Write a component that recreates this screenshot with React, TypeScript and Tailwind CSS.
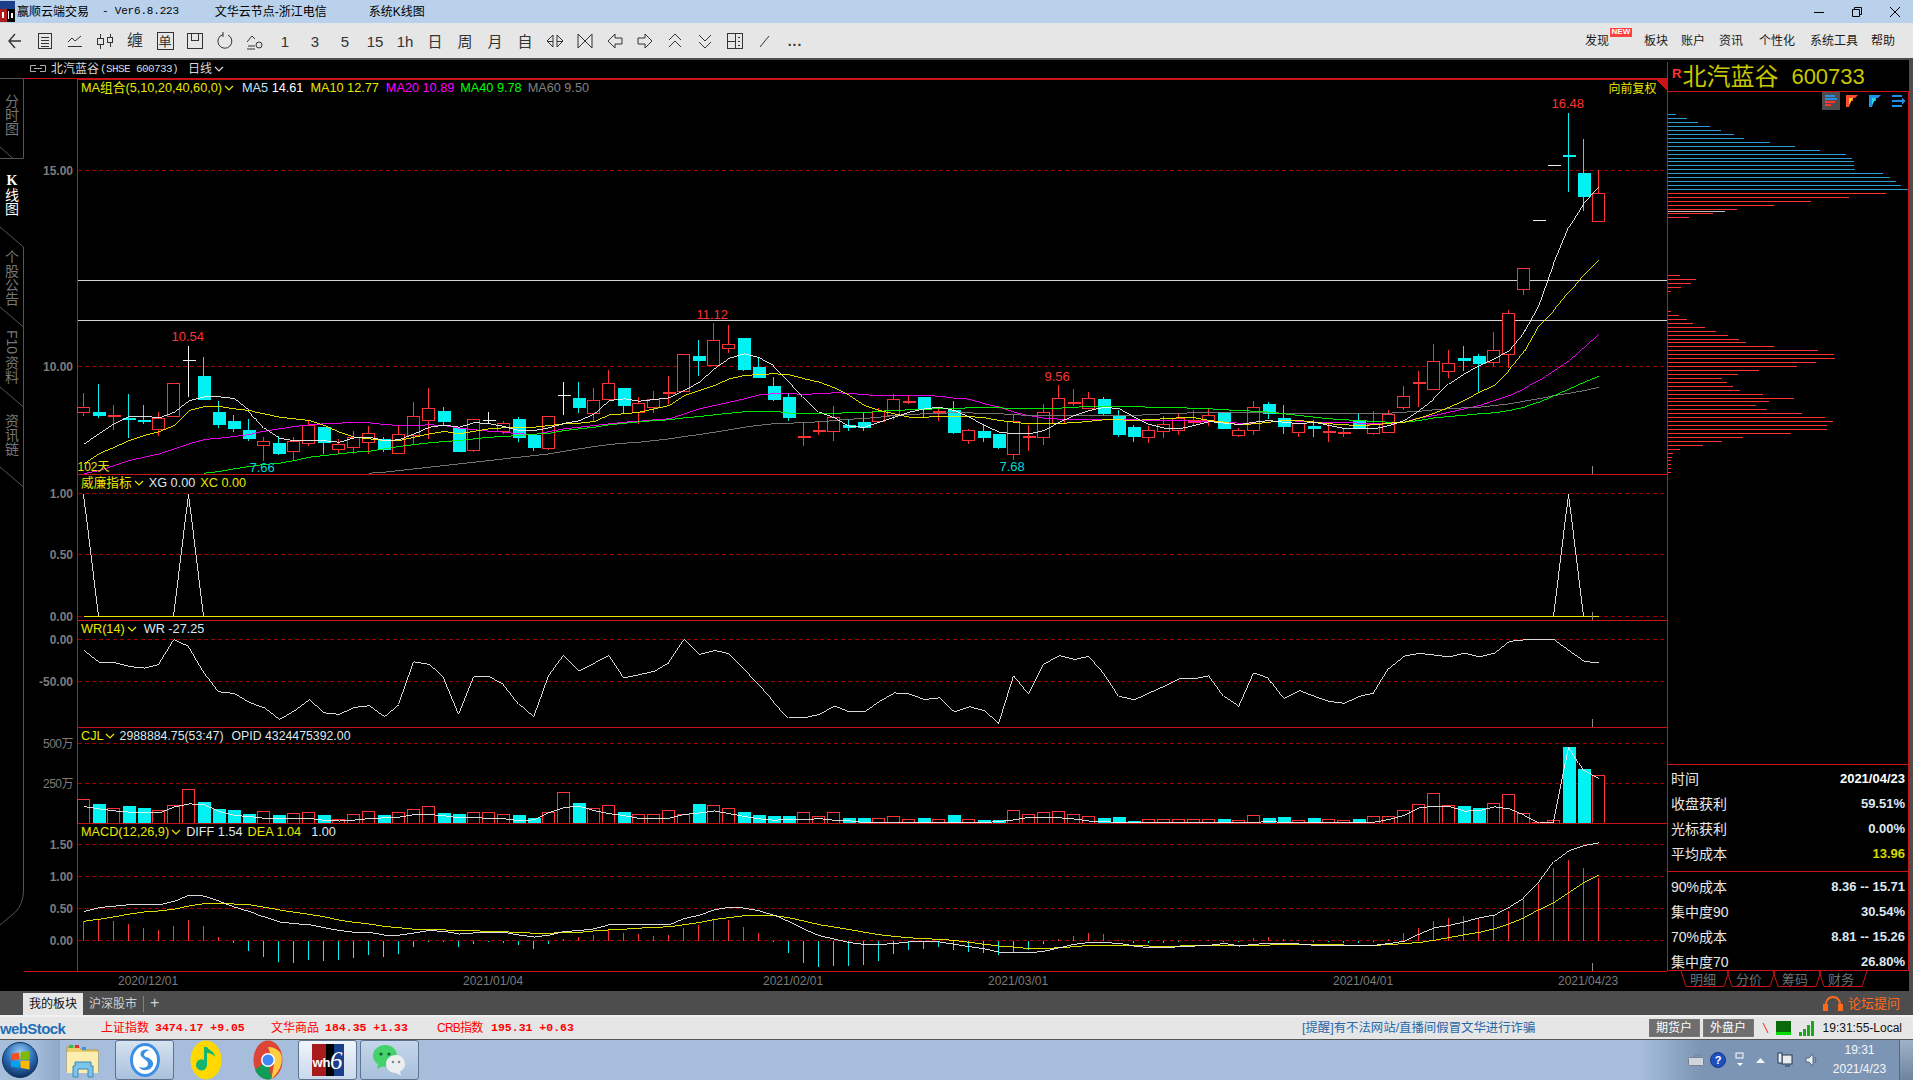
import type { ReactNode } from "react";

type Candle = ["r" | "c" | "w", number, number, number, number];

const FRAME = "#c81414";
const DASH = "#a00000";
const UP = "#ff3333";
const DOWN = "#00f2f2";
const YELLOW = "#f4f400";

const barX = (i: number) => 83 + 15 * i;

// open/close box top + bottom, then wick high + low (page px)
const candles: Candle[] = [
  ["r", 406.7, 412.3, 392, 415.7], ["c", 411, 415, 383, 417], ["r", 414.5, 415.5, 404, 429], ["c", 417.7, 419.7, 393, 437],
  ["c", 419, 421.7, 404, 423], ["r", 417.7, 428.7, 411, 435], ["r", 383, 416.3, 383, 416.3], ["w", 359, 360, 345, 396],
  ["c", 375, 399.7, 356, 399.7], ["c", 411, 424.7, 400, 427], ["c", 420, 428.7, 414, 431], ["c", 429, 438.7, 418, 440],
  ["r", 441.3, 444.7, 436, 460], ["c", 442, 453.7, 435, 454], ["r", 441, 451, 436, 460], ["r", 425, 442.7, 420, 445],
  ["c", 426, 442.7, 426, 453], ["r", 444.3, 449.3, 438, 453], ["r", 436.7, 447.3, 430, 453], ["r", 433, 442.3, 425, 453],
  ["c", 438, 449, 436, 451], ["r", 434, 453, 424, 453], ["r", 416, 435, 401, 443], ["r", 408, 420, 387, 438],
  ["c", 410, 421, 406, 425], ["c", 427, 451, 427, 451], ["r", 419, 450, 419, 451], ["w", 419.7, 420.3, 411, 423],
  ["r", 423, 431, 420, 433], ["c", 418, 437.7, 416, 441.7], ["c", 434.7, 447.7, 433, 450.7], ["r", 416.3, 447.7, 416, 449.7],
  ["w", 394, 395, 381, 414], ["c", 397, 407.7, 381, 412.7], ["r", 400.3, 412.7, 387, 420], ["r", 383.3, 399.3, 369, 399.3],
  ["c", 387.3, 405.7, 387, 413], ["r", 403.3, 411.7, 396, 423], ["r", 399.3, 406.7, 390, 412.7], ["r", 391.3, 392.7, 375, 403],
  ["r", 354.3, 390.7, 354.3, 390.7], ["c", 355, 360, 339, 375], ["r", 340.3, 364.7, 322, 364.7], ["r", 344.3, 347.7, 324, 352.7],
  ["c", 337, 369, 337, 370.7], ["c", 366, 377, 357, 377], ["c", 385, 399, 376, 400], ["c", 396, 417, 392, 420.7],
  ["r", 435, 436.3, 422.7, 445], ["r", 429.3, 431.7, 421.7, 434], ["r", 417.3, 430.7, 405.3, 440], ["c", 424.7, 427, 418, 430],
  ["c", 421, 427.7, 412.7, 430], ["r", 411, 420.7, 407, 422.7], ["r", 399.3, 415.3, 393, 419.3], ["r", 400.3, 401.7, 394, 403.3],
  ["c", 396, 409.3, 396, 417], ["r", 410, 412, 406, 420.7], ["c", 409.3, 432, 400, 433.3], ["r", 430.3, 439.7, 428.3, 443],
  ["c", 430, 437, 424, 441], ["c", 433, 447, 433, 448], ["r", 421.3, 454.3, 414, 459], ["r", 435, 436.7, 424, 450],
  ["r", 412.3, 436.7, 403.3, 444], ["r", 398.3, 423.3, 384, 423.3], ["r", 401.3, 403.7, 388, 405.3], ["r", 398.3, 408.3, 391, 408],
  ["c", 398, 413, 396.3, 415.3], ["c", 415, 434, 409.3, 436], ["c", 426, 436.7, 424.7, 441], ["r", 430.3, 436.7, 425, 442],
  ["r", 424.3, 430.7, 415, 437], ["r", 418.3, 429.7, 413.3, 434], ["r", 419.3, 422, 409, 424.7], ["r", 415, 420, 407.7, 425],
  ["c", 411, 428.7, 411, 428.7], ["r", 430.3, 434.7, 427.7, 436.7], ["r", 407.3, 429.7, 400, 434], ["c", 403, 413.7, 401.7, 418],
  ["c", 417, 426.7, 404, 433], ["r", 423.3, 431.7, 423.3, 436.7], ["c", 425, 428.7, 419.3, 436], ["r", 430, 431.7, 421.7, 441],
  ["r", 431.3, 433.3, 428.3, 436], ["c", 420.7, 428.3, 412.7, 428.3], ["r", 424.3, 433, 410.7, 434], ["r", 414.3, 431.7, 409, 431.7],
  ["r", 396.3, 406.7, 385, 409.7], ["r", 381, 382.7, 370, 406], ["r", 361.3, 388.7, 343, 388.7], ["r", 363.3, 371.3, 349, 377.7],
  ["c", 357, 360, 345, 370], ["c", 355, 363.7, 353, 391], ["r", 350.3, 361.7, 331.7, 365], ["r", 313.3, 354.3, 309, 367.3],
  ["r", 268.3, 289, 268.3, 294], ["w", 219, 220, 219, 220], ["w", 164, 165, 164, 165], ["c", 154, 156, 112, 191.7],
  ["c", 172, 196, 138, 210], ["r", 193.3, 220.7, 169, 220.7],
];

const ma5 = [443.3, 433, 423, 416, 415.7, 417.3, 411.7, 400, 396.3, 396.3, 398, 410, 427.7, 437.7, 440.3, 440.3, 440.3, 441.7, 437.3, 436.7, 440, 439.3, 433.3, 426.7, 424.7, 426.7, 422, 423.3, 426, 430, 430, 427.3, 422.7, 420.3, 413.3, 400, 398.3, 400.7, 399, 397.3, 390, 381.7, 368.3, 357.7, 353.3, 357.3, 365, 380, 396.7, 411.7, 417.3, 426, 426.7, 421.7, 416.7, 411.7, 408.3, 406.7, 410, 416.7, 425, 431.7, 433.3, 433.3, 430, 421.7, 415, 410, 406.7, 408.3, 416.7, 424, 427.7, 428.3, 425, 421, 422.7, 424, 421.7, 420, 421.7, 423.3, 421.7, 425, 428, 428.3, 428.3, 425, 420, 410, 398.3, 383.3, 373.3, 365, 358.3, 350, 332, 305, 263, 226.7, 203, 186.7];
const ma10 = [463, 453, 446.7, 440, 435, 431, 425, 410, 406, 406, 408.3, 410, 413.3, 416.7, 418.3, 420, 425, 431.7, 436.7, 438.3, 440, 440, 436.7, 433.3, 431, 433.3, 430.7, 428.3, 427.3, 427.3, 426.7, 425, 423.3, 422.7, 421, 414.3, 413.3, 411.7, 408.3, 405, 395, 390, 385, 378.3, 375, 374, 373.3, 374.3, 378.3, 381.7, 387.3, 395, 405, 410, 413.3, 416.7, 416.7, 416, 416, 416, 417.3, 420, 421.7, 423.3, 423.3, 422.7, 422.3, 420.7, 419.3, 419.3, 420, 419, 418.3, 417.3, 417.3, 420, 421.7, 424.3, 423.3, 421.7, 420, 420, 421.7, 423.3, 424.3, 425, 424.3, 422.7, 421.7, 417.7, 412.7, 406.7, 400, 391.7, 385, 370, 351.7, 325, 310, 291.7, 274, 259];
const ma20 = [473, 470, 465, 460, 456.7, 453.3, 448.3, 443.3, 439, 437.7, 436, 434, 430.7, 428.3, 426, 424.3, 423.3, 422.7, 421.7, 422.3, 424, 425, 425, 424.3, 425, 427.7, 429.3, 430.7, 431.7, 433.3, 434, 431, 428.3, 426.7, 425, 423.3, 421.7, 420.7, 419.3, 418.3, 413.3, 408.3, 405, 401.7, 398.3, 394.3, 393.3, 393.3, 393.7, 393.3, 392.3, 392.7, 394.3, 395, 395, 395, 395, 395.7, 397.7, 398.7, 403.3, 406.7, 411.7, 415, 417.7, 418.7, 419.3, 419.3, 419.3, 419.3, 419.3, 420, 420, 420, 420.7, 420.7, 421.7, 422.7, 423.3, 421.7, 420, 420.7, 421.7, 421.7, 421.7, 422.7, 423.3, 423.3, 421.7, 417.3, 415, 411.7, 408.3, 405, 400, 395, 388.3, 380, 370, 360, 346.7, 333.3];
const ma40 = [472.7, 471, 468.3, 466, 464, 462.7, 460, 456.7, 455, 453.3, 451.7, 450.7, 448.3, 446, 444, 442.3, 441, 440, 438.3, 436.7, 436, 435, 433.7, 432.7, 430, 428.3, 426.7, 424.3, 422.7, 421.3, 420, 419.3, 417.3, 416, 414.3, 412.7, 411.3, 410.7, 410.7, 412.7, 413.3, 413.3, 412.7, 412.3, 412.3, 410.7, 410, 409.3, 408.7, 408.3, 408, 407.3, 407.3, 407.3, 408.3, 408.3, 408.3, 407.7, 406.7, 406, 405.7, 405.7, 406, 406.7, 406.7, 407.3, 407.7, 408.3, 409.3, 410, 410.7, 411.7, 413.3, 415, 416.7, 418.3, 419.3, 420, 421, 421.7, 421.7, 420, 417.3, 416, 414.7, 413.3, 412.3, 410, 406.7, 401.7, 395, 388.3, 381.7, 375.7];
const ma60 = [472.7, 471.7, 470, 468.3, 466.7, 465, 463.3, 461.7, 460, 458.3, 456.7, 455, 453.3, 450.7, 448.3, 446, 444, 442.7, 441.7, 440, 438.3, 436, 434, 431.7, 429.3, 426.7, 424.7, 423.3, 422.7, 422, 421.3, 420, 418.7, 418, 416.7, 415, 414, 413.3, 412.7, 412.3, 412.3, 413.3, 413.3, 414, 415, 415, 415, 415, 415, 415, 415, 415, 414, 413.3, 412.7, 412.3, 412, 412, 412, 412, 412, 412.7, 412.7, 412.7, 412.7, 413.3, 413.3, 413.3, 412.7, 411.7, 410.7, 409.3, 408.3, 407.3, 406.7, 405, 403.3, 400.7, 398.3, 395, 392.7, 390, 386.7];

const wr = [650.4, 662, 662, 666, 667.6, 664, 639.4, 646.3, 671.8, 691.4, 693, 702, 707.2, 719, 710.3, 699.3, 712.4, 713.8, 706.9, 705.2, 716.2, 703.8, 661.4, 663.9, 677.6, 713.8, 676.3, 676.3, 684.5, 703.8, 716.9, 675.2, 654.6, 670, 662.5, 654.6, 677.3, 674.2, 670.7, 662, 639.4, 653.9, 650, 653.2, 668.3, 683.8, 701, 717.2, 717.2, 714, 705.5, 711.4, 711.4, 701, 692.4, 693.5, 699, 697.3, 711.4, 706.2, 710.3, 723.4, 675.2, 693.5, 663.2, 655.2, 659, 655.6, 672.8, 695.9, 699.3, 692.4, 685.6, 678.3, 678.3, 675.2, 695.9, 706.2, 672.5, 678, 697.6, 690, 695.9, 701, 702.8, 695.9, 692.4, 667.6, 655.6, 652.8, 654.6, 656.3, 652.8, 656.3, 652.8, 640.8, 639.4, 639.4, 639.4, 650.4, 661, 662.5];

const volTop = [799.2, 803, 808, 805, 807, 810, 805, 789, 801, 808, 809, 813, 811, 814, 813, 812, 814, 818.5, 814, 811, 814, 812, 809, 806, 812, 813, 812, 812, 814, 814, 817, 812, 792, 802, 808, 805.4, 811, 814, 814, 810, 814, 803, 805.4, 808, 811, 814, 815, 815, 812, 815.5, 812, 817, 817, 817.5, 816.4, 819, 817, 819, 814, 818.5, 819, 819, 810, 814, 812, 811, 814, 815.5, 817, 816, 820, 819, 818.5, 818.5, 819, 818.5, 818, 820, 814.5, 817, 816, 820, 817, 818.5, 820, 818, 816.4, 815.5, 810, 804, 793, 805, 805, 807, 803, 794, 813, 822, 820, 746, 768, 775];
const volLineEnd: Record<number, number> = { 97: 822.5, 98: 821.5, 99: 746, 100: 770, 101: 778.5 };

const macdBar = [920.4, 919, 920.4, 923, 927, 929, 925, 919, 925, 936, 942.8, 950.7, 956.5, 961.7, 962.8, 959, 960, 959.3, 957.6, 954.8, 956.5, 953.8, 946.6, 941.8, 941, 946.6, 943.5, 941.8, 942, 944.5, 948, 943.5, 938.3, 936, 934.2, 929.7, 932, 933.8, 935.2, 934.8, 927, 924.9, 919.7, 919.7, 926, 932.8, 941.4, 952.4, 962, 966.5, 965.5, 965.5, 964.5, 960, 953.8, 949, 948, 946.6, 949.7, 951.7, 952.8, 954.5, 951.4, 949.7, 943.8, 938, 935, 932.4, 933.8, 939, 942, 942.8, 942.8, 941.5, 940, 939.4, 941, 941, 937.6, 936.9, 938.7, 939.4, 941, 941.4, 942, 942, 941, 938.7, 932.8, 927.3, 920, 917.3, 915.2, 917.3, 915.6, 910, 899, 883.6, 867, 859.4, 867, 877.4];
const diff = [911, 907, 905.6, 904.2, 904.2, 904.2, 900.8, 894.6, 895.6, 900.8, 906.6, 911, 916.3, 921.4, 923.2, 924.2, 927.3, 930, 931.8, 931.8, 934.5, 934.5, 932.4, 930, 931, 933.5, 932.4, 931.8, 931.8, 934.5, 936.6, 934.5, 931, 930, 928.3, 924.2, 923.5, 924.2, 924.2, 924.2, 918, 914.6, 909.4, 906.6, 907.6, 910.4, 914.6, 921.4, 929, 935.2, 938.6, 942, 944, 944, 943, 941.4, 941.4, 941.4, 943.8, 946.2, 948.3, 951.7, 951.7, 952.4, 950.7, 947.2, 943.8, 942, 942, 943, 945.5, 947.2, 947.2, 946.2, 945.5, 944.8, 943, 945.5, 943.8, 942.8, 943, 943.5, 944.8, 944.8, 944.8, 944.8, 944.8, 943, 940.7, 933.5, 927.3, 924.9, 921.4, 917.3, 914.6, 906.6, 897.3, 881.8, 861.2, 850, 845, 842.2];
const dea = [920.7, 918.7, 916.3, 913.5, 911.4, 910.4, 908.7, 905.3, 903.2, 903.2, 903.5, 904.2, 906.6, 909.4, 911.8, 913.9, 916.3, 919.7, 921.8, 923.5, 925.9, 927.3, 928.7, 929.4, 929.4, 930.4, 930.4, 930.7, 931.4, 931.8, 932.8, 932.8, 931.8, 931.8, 930.4, 929.4, 928.7, 927.6, 926.9, 926.2, 924.2, 922, 919, 917, 915.2, 914.6, 915.2, 917.3, 920.7, 924.2, 926.6, 929, 931.8, 934.2, 935.9, 937.3, 938.3, 938.7, 940, 941.8, 943.8, 945.5, 946.6, 948, 948, 947.2, 946.2, 944.8, 944.8, 944.8, 945, 945.5, 945.5, 945.5, 945, 945, 944.8, 945, 944.8, 944.5, 944.1, 944.1, 944.1, 944.1, 944.5, 944.5, 944.8, 944.1, 943, 942, 939.7, 937, 934.2, 931.8, 928.3, 923.2, 917.3, 909.4, 901.8, 891.5, 881.8, 874.3];

// chip distribution: [y, width]
const blueChips: [number, number][] = [[114, 8], [118, 19], [122, 30], [126, 42], [130, 53], [134, 66], [138, 76], [142, 102], [146, 127], [150, 152], [154, 178], [158, 184], [161, 186], [165, 186], [169, 187], [173, 215], [177, 222], [181, 228], [185, 233], [189, 240]];
const redChips: [number, number][] = [[193, 218], [197, 181], [201, 143], [205, 106], [209, 69], [213, 45], [217, 21], [275, 12], [279, 28], [283, 23], [287, 13], [291, 3], [311, 3], [315, 11], [319, 19], [323, 25], [327, 37], [331, 48], [335, 60], [339, 71], [342, 78], [346, 106], [350, 150], [354, 166], [358, 167], [362, 148], [366, 129], [370, 91], [374, 70], [378, 54], [382, 59], [386, 65], [390, 72], [394, 95], [398, 126], [401, 101], [405, 88], [409, 99], [413, 134], [417, 157], [421, 165], [425, 159], [429, 159], [433, 123], [437, 75], [441, 54], [445, 35], [449, 12], [453, 5], [457, 4], [460, 3], [464, 3], [468, 3], [472, 3]];

const toolTexts = (s: string) => <span className="text-[15px] leading-none text-[#333]">{s}</span>;

const Ico = ({ children }: { children: ReactNode }) => (
  <svg width="20" height="20" viewBox="0 0 20 20" fill="none" stroke="#333" strokeWidth="1" shapeRendering="crispEdges">
    {children}
  </svg>
);

const toolItems: ReactNode[] = [
  <Ico key="a"><path d="M10 3 4 10l6 7M4 10h12" shapeRendering="auto" strokeWidth="1.4" /></Ico>,
  <Ico key="b"><path d="M3.5 2.5h13v15h-13zM6 6.5h8M6 9.5h8M6 12.5h8M6 15h8" /></Ico>,
  <Ico key="c"><path d="M3 11l4-4 3 3 6-5M3 15.5h14" shapeRendering="auto" /></Ico>,
  <Ico key="d"><path d="M2.5 7.5h6v6h-6zM5.5 3v4.5M5.5 13.5V18M12.5 6.5h5v5h-5zM15 2.5v4M15 11.5V16" /></Ico>,
  <span key="e" className="text-[16px] leading-none text-[#333]">缠</span>,
  <span key="f" className="flex h-[18px] w-[17px] items-center justify-center border border-[#333] text-[13px] leading-none text-[#333]">单</span>,
  <Ico key="g"><path d="M2.5 2.5h15v15h-15zM6.5 2.5v7h7v-7" /></Ico>,
  <Ico key="h"><path d="M8 3.5a7 7 0 1 0 5 .5M8 1v5" shapeRendering="auto" /></Ico>,
  <Ico key="i"><path d="M2 11l5-6 3 3M3 15h7M2 18h8" shapeRendering="auto" /><circle cx="14" cy="14" r="3" shapeRendering="auto" /></Ico>,
  toolTexts("1"), toolTexts("3"), toolTexts("5"), toolTexts("15"), toolTexts("1h"), toolTexts("日"), toolTexts("周"), toolTexts("月"), toolTexts("自"),
  <Ico key="j"><path d="M8 4 2 10l6 6zM12 4l6 6-6 6z" shapeRendering="auto" /><path d="M8 10H3M12 10h5" /></Ico>,
  <Ico key="k"><path d="M3 3v14M17 3v14M3 3l7 7-7 7M17 3l-7 7 7 7" shapeRendering="auto" /></Ico>,
  <Ico key="l"><path d="M10 3 3 10l7 7v-4h7V7h-7z" shapeRendering="auto" /></Ico>,
  <Ico key="m"><path d="M10 3l7 7-7 7v-4H3V7h7z" shapeRendering="auto" /></Ico>,
  <Ico key="n"><path d="M4 9l6-6 6 6M4 16l6-6 6 6" shapeRendering="auto" /></Ico>,
  <Ico key="o"><path d="M4 4l6 6 6-6M4 11l6 6 6-6" shapeRendering="auto" /></Ico>,
  <Ico key="p"><path d="M2.5 2.5h15v15h-15zM10.5 2.5v15M2.5 10.5h8M13 6h2M13 10h2M13 14h2" /></Ico>,
  <Ico key="q"><path d="M5 16 14 5" shapeRendering="auto" /></Ico>,
  <span key="r" className="text-[14px] font-bold leading-none tracking-[1px] text-[#333]">...</span>,
];

const menus: [string, string][] = [["板块", "ml-[13px]"], ["账户", "ml-[13px]"], ["资讯", "ml-[14px]"], ["个性化", "ml-[16px]"], ["系统工具", "ml-[15px]"], ["帮助", "ml-[13px]"]];

function Chevron({ color = "#e8e800" }: { color?: string }) {
  return (
    <svg width="10" height="6" viewBox="0 0 10 6" fill="none" stroke={color} strokeWidth="1.2" className="shrink-0">
      <path d="M1 1l4 4 4-4" />
    </svg>
  );
}

function poly(start: number, ys: number[]) {
  return ys.map((y, i) => `${barX(start + i)},${y}`).join(" ");
}

function Grid({ ys }: { ys: number[] }) {
  return (
    <>
      {ys.map((y) => (
        <line key={y} x1="77" x2="1667" y1={y} y2={y} stroke={DASH} strokeDasharray="4 3" />
      ))}
    </>
  );
}

function Marker({ y }: { y: number }) {
  return <line x1="1591.5" x2="1591.5" y1={y - 9} y2={y} stroke="#8c8c8c" />;
}

function Line({ start = 0, ys, color }: { start?: number; ys: number[]; color: string }) {
  return <polyline points={poly(start, ys)} fill="none" stroke={color} strokeWidth="0.9" />;
}

// one indicator pane: y axis on the left, plot drawn in page coordinates
function Pane({ top, height, ticks, legend, children }: { top: number; height: number; ticks: [string, number][]; legend: ReactNode; children: ReactNode }) {
  return (
    <div className="flex" style={{ height }}>
      <div className="relative w-[53px] shrink-0">
        {ticks.map(([label, y]) => (
          <span
            key={label}
            className={`absolute right-[4px] text-[12px] leading-[14px] text-[#7c7c7c] ${label.includes("万") ? "font-normal tracking-[-0.5px]" : "font-bold"}`}
            style={{ top: y - top - 7 }}
          >
            {label}
          </span>
        ))}
      </div>
      <div className="relative flex-1 border-l border-t border-[#c81414]">
        <svg className="absolute left-[-1px] top-[-1px]" width="1590" height={height} viewBox={`76.5 ${top - 0.5} 1590 ${height}`} shapeRendering="crispEdges">
          {children}
        </svg>
        <div className="absolute left-[3px] top-0 flex h-[16px] items-center whitespace-nowrap text-[12.7px] leading-none">{legend}</div>
      </div>
    </div>
  );
}

function KChart() {
  const flagged: [string, string, number, number][] = [
    ["10.54", "#ff3333", 94, 250],
    ["11.12", "#ff3333", 619, 228],
    ["9.56", "#ff3333", 967, 290],
    ["16.48", "#ff3333", 1474, 17],
    ["7.66", "#00d8d8", 172, 381],
    ["7.68", "#00d8d8", 922, 380],
  ];
  return (
    <Pane
      top={79}
      height={395}
      ticks={[["15.00", 170.5], ["10.00", 366.5]]}
      legend={
        <>
          <span className="text-[#e8e800]">MA组合(5,10,20,40,60,0)</span>
          <span className="ml-[2px]"><Chevron /></span>
          <span className="ml-[8px] text-[#bfe6ff]">MA5 <span className="text-white">14.61</span></span>
          <span className="ml-[7px] text-[#e8e800]">MA10 12.77</span>
          <span className="ml-[7px] text-[#ff00ff]">MA20 10.89</span>
          <span className="ml-[6px] text-[#00ff00]">MA40 9.78</span>
          <span className="ml-[6px] text-[#808080]">MA60 9.50</span>
        </>
      }
    >
      <Grid ys={[170, 366]} />
      <line x1="77" x2="1667" y1="280" y2="280" stroke="#d4d4d4" />
      <line x1="77" x2="1667" y1="320" y2="320" stroke="#d4d4d4" />
      {candles.map(([kind, top, bottom, high, low], i) => {
        const x = barX(i);
        const color = kind === "r" ? UP : kind === "c" ? DOWN : "#f0f0f0";
        const h = bottom - top;
        return (
          <g key={i}>
            <line x1={x} x2={x} y1={high} y2={low} stroke={color} />
            {kind === "r" && h > 3 ? (
              <rect x={x - 6} y={top} width="12" height={h} fill="#000" stroke={color} />
            ) : (
              <rect x={x - 6} y={top} width="13" height={kind === "w" ? 1 : Math.max(h, 2)} fill={color} />
            )}
          </g>
        );
      })}
      <Line ys={ma20} color="#ff00ff" />
      <Line start={19} ys={ma60} color="#808080" />
      <Line start={8} ys={ma40} color="#00ff00" />
      <Line ys={ma10} color={YELLOW} />
      <Line ys={ma5} color="#f4f4f4" />
      <Marker y={474} />
      <polygon points="1655,79 1667,79 1667,91" fill={FRAME} />
      {flagged.map(([label, color, left, top]) => (
        <text key={label} x={left + 77} y={top + 79 + 11} fill={color} fontSize="13" shapeRendering="auto">{label}</text>
      ))}
      <text x="77" y="470" fill="#e8e800" fontSize="12" shapeRendering="auto">102天</text>
      <text x="1608" y="92" fill="#e8e800" fontSize="12" shapeRendering="auto">向前复权</text>
    </Pane>
  );
}

function LeftRail() {
  const outline = "M0 18.5h23.5v80H0M0 87l13 11.5M0 167l23.5 20M0 247l23.5 20M0 327l23.5 20M0 407l23.5 20M23.5 187v643q0 14-8 22L0 865";
  return (
    <div className="relative h-full w-[24px] shrink-0 text-[14px] leading-[14px] text-[#777]">
      <svg className="absolute left-0 top-0" width="24" height="900" fill="none" stroke="#555">
        <path d={outline} />
      </svg>
      <div className="flex flex-col items-center pt-[34px]">
        <div className="flex h-[80px] w-[14px] flex-col items-center"><span>分</span><span>时</span><span>图</span></div>
        <div className="flex h-[76px] w-[14px] flex-col items-center font-bold text-white"><span className="font-['Liberation_Serif']">K</span><span className="font-normal">线</span><span className="font-normal">图</span></div>
        <div className="flex h-[80px] w-[14px] flex-col items-center"><span>个</span><span>股</span><span>公</span><span>告</span></div>
        <div className="flex h-[84px] w-[14px] flex-col items-center"><span className="mb-[2px] [writing-mode:vertical-rl]">F10</span><span>资</span><span>料</span></div>
        <div className="flex h-[80px] w-[14px] flex-col items-center"><span>资</span><span>讯</span><span>链</span></div>
      </div>
    </div>
  );
}

function ChipPanel() {
  const stats: [string, string, string][] = [
    ["时间", "2021/04/23", "text-white"],
    ["收盘获利", "59.51%", "text-[#dfe8f0]"],
    ["光标获利", "0.00%", "text-[#dfe8f0]"],
    ["平均成本", "13.96", "text-[#d8d800]"],
  ];
  const stats2: [string, string][] = [
    ["90%成本", "8.36 -- 15.71"],
    ["集中度90", "30.54%"],
    ["70%成本", "8.81 -- 15.26"],
    ["集中度70", "26.80%"],
  ];
  return (
    <div className="flex h-full w-[242px] shrink-0 flex-col pt-[2px]">
      <div className="flex h-[30px] items-center border-b border-l border-[#c81414] pl-[4px] text-[#c8c800]">
        <span className="-mt-[6px] text-[13px] font-bold leading-none text-[#ff3333]">R</span>
        <span className="ml-[1px] text-[24px] leading-none">北汽蓝谷</span>
        <span className="ml-[13px] text-[22px] leading-none">600733</span>
      </div>
      <div className="relative h-[673px] border-b border-l border-r border-[#c81414]">
        <svg className="absolute left-0 top-0" width="240" height="672" viewBox="1668 92.5 240 672" shapeRendering="crispEdges">
          {blueChips.map(([y, w]) => (
            <rect key={y} x="1668" y={y} width={w} height="1" fill="#2a9bd6" />
          ))}
          {redChips.map(([y, w]) => (
            <rect key={y} x="1668" y={y} width={w} height="1" fill={UP} />
          ))}
          <rect x="1668" y="211" width="57" height="1" fill="#bdbdbd" />
        </svg>
        <div className="absolute right-[2px] top-0 flex items-center">
          <span className="flex h-[18px] w-[18px] items-center justify-center bg-[#4d4d4d]">
            <svg width="12" height="12" viewBox="0 0 12 12" shapeRendering="crispEdges"><rect y="0" width="10" height="2" fill="#2a8fe0" /><rect y="3" width="12" height="2" fill="#2a8fe0" /><rect y="6" width="10" height="2" fill={UP} /><rect y="9" width="6" height="2" fill={UP} /></svg>
          </span>
          <svg className="ml-[6px]" width="12" height="12" viewBox="0 0 12 12"><path d="M0 0h12L9 3H7v3H5l-2 6H0z" fill="#ff4b2e" /><path d="M3 3h4L3 10z" fill="#ffd21f" /></svg>
          <svg className="ml-[11px]" width="12" height="12" viewBox="0 0 12 12"><path d="M0 0h12L9 3H7v3H5l-2 6H0z" fill="#1e90e6" /><path d="M3 3h4L3 10z" fill="#22d8e8" /></svg>
          <svg className="ml-[11px]" width="14" height="12" viewBox="0 0 14 12" shapeRendering="crispEdges"><rect width="10" height="2" fill="#1e90e6" /><rect y="5" width="10" height="2" fill="#1e90e6" /><rect y="10" width="10" height="2" fill="#1e90e6" /><path d="M10 3l4 3-4 3z" fill="#1e90e6" /></svg>
        </div>
      </div>
      <div className="flex h-[107px] flex-col border-b border-l border-r border-[#c81414] px-[3px] pt-[1px]">
        {stats.map(([k, v, c]) => (
          <div key={k} className="flex h-[25px] shrink-0 items-center justify-between">
            <span className="text-[14px] leading-none text-[#e8e8e8]">{k}</span>
            <span className={`text-[13px] font-bold leading-none ${c}`}>{v}</span>
          </div>
        ))}
      </div>
      <div className="flex h-[99px] flex-col border-b border-l border-r border-[#c81414] px-[3px] pt-[2px]">
        {stats2.map(([k, v]) => (
          <div key={k} className="flex h-[25px] shrink-0 items-center justify-between">
            <span className="text-[14px] leading-none text-[#e8e8e8]">{k}</span>
            <span className="text-[13px] font-bold leading-none text-[#dfe8f0]">{v}</span>
          </div>
        ))}
      </div>
      <div className="relative flex h-[16px] pl-[13px]">
        {["明细", "分价", "筹码", "财务"].map((t) => (
          <div key={t} className="relative flex w-[46px] items-center justify-center text-[13px] leading-none text-[#6e6e6e]">
            <svg className="absolute left-0 top-0" width="50" height="16" fill="none" stroke={FRAME}>
              <path d="M1 0l5 15.5h38L49 0" />
            </svg>
            <span className="relative">{t}</span>
          </div>
        ))}
      </div>
    </div>
  );
}

function TaskbarIcons() {
  return (
    <>
      <div className="flex w-[60px] items-center pl-[1px] bg-[linear-gradient(90deg,#a6bedc_55%,#8ea7c6)]">
        <svg width="38" height="38" viewBox="0 0 38 38">
          <defs>
            <radialGradient id="orb" cx="50%" cy="30%" r="70%"><stop offset="0" stopColor="#9fd0f5" /><stop offset="0.55" stopColor="#2b6fb8" /><stop offset="1" stopColor="#0e2f5f" /></radialGradient>
          </defs>
          <circle cx="19" cy="19" r="17.5" fill="url(#orb)" stroke="#14345e" />
          <path d="M10 13l8-1.5v7l-8 .5z" fill="#f25022" />
          <path d="M19.5 11.3l9-1.5v8.7l-9 .5z" fill="#7fba00" />
          <path d="M10 20.5l8-.5v7l-8-1.5z" fill="#00a4ef" />
          <path d="M19.5 20l9-.5v9l-9-1.7z" fill="#ffb900" />
        </svg>
      </div>
      <div className="flex w-[55px] items-center justify-center pr-[10px]">
        <svg width="34" height="36" viewBox="0 0 34 36">
          <path d="M1 5h12l3 3h16v22H1z" fill="#e9cd6e" stroke="#b89c44" />
          <path d="M1 10h31v21H1z" fill="#fbeeb0" />
          <rect x="3" y="3" width="4" height="3" fill="#3fb54a" /><rect x="9" y="3" width="4" height="3" fill="#d8382c" /><rect x="16" y="5" width="4" height="3" fill="#3d8fe0" />
          <path d="M9 20h16v4h2v11h-5v-8H12v8H7V24h2z" fill="#7cc4ea" stroke="#3f86b4" />
        </svg>
      </div>
      <div className="flex w-[59px] items-center justify-center rounded-[3px] border border-[#5d7390] bg-[linear-gradient(180deg,#d5e2f1,#aac1dc)]">
        <svg width="32" height="36" viewBox="0 0 32 36">
          <ellipse cx="16" cy="18" rx="15" ry="17" fill="#3c8fe4" />
          <ellipse cx="16" cy="18" rx="12" ry="14" fill="#fff" />
          <path d="M21 8c-7-2-11 2-9 6 2 3 7 4 7 8 0 3-4 5-9 3 3 5 12 4 14-2 1-4-3-7-7-8-3-1-3-5 4-7z" fill="#3c8fe4" />
        </svg>
      </div>
      <div className="flex w-[64px] items-center justify-center">
        <svg width="32" height="40" viewBox="0 0 32 40">
          <ellipse cx="16" cy="20" rx="15.5" ry="19.5" fill="#ffd800" />
          <path d="M17 7v18a5.5 5.5 0 1 1-3-5V7zM17 7c2 4 8 4 8 10-2-3-5-4-8-4z" fill="#13b573" />
        </svg>
      </div>
      <div className="flex w-[60px] items-center justify-center">
        <svg width="30" height="40" viewBox="0 0 30 40">
          <ellipse cx="15" cy="20" rx="14.5" ry="19.5" fill="#db4437" />
          <path d="M15 20 2 30c3 6 8 9.500 13 9.500 2 0 3.500-.4 3.500-.4z" fill="#0f9d58" />
          <path d="M15 7c6 0 12 3 13.500 8.500 1 5 .5 14-10 23.500L21 24z" fill="#ffcd40" />
          <circle cx="15" cy="20" r="7" fill="#fff" />
          <circle cx="15" cy="20" r="5.500" fill="#4285f4" />
        </svg>
      </div>
      <div className="flex w-[59px] items-center justify-center rounded-[3px] border border-[#5d7390] bg-[linear-gradient(180deg,#f0f5fb,#c9d9ec)]">
        <div className="relative flex h-[32px] w-[32px] overflow-hidden bg-[linear-gradient(90deg,#a81c1c_0_45%,#000_45%_70%,#1a3f8c_70%)]">
          <span className="absolute left-[1px] top-[12px] font-['Liberation_Sans'] text-[13px] font-bold leading-none text-white">wh</span>
          <span className="absolute right-[1px] top-[4px] font-['Liberation_Serif'] text-[25px] italic leading-none text-white">6</span>
        </div>
      </div>
      <div className="ml-[3px] flex w-[59px] items-center justify-center rounded-[3px] border border-[#5d7390] bg-[linear-gradient(180deg,#c5d6ea,#a8c0dc)]">
        <svg width="34" height="32" viewBox="0 0 34 32">
          <path d="M12 1C5 1 0 6 0 12c0 3.500 2 6.500 5 8.500L4 25l5-2.500c1 .2 2 .3 3 .3 7 0 12-5 12-11S19 1 12 1z" fill="#44d26a" />
          <circle cx="8" cy="10" r="1.600" fill="#0e5a2a" /><circle cx="16" cy="10" r="1.600" fill="#0e5a2a" />
          <path d="M23 11c-6 0-10 4-10 9s4 9 10 9l5 2.500-1-4c3-1.500 5-4 5-7.500 0-5-4-9-9-9z" fill="#eceff2" />
          <circle cx="20" cy="18" r="1.300" fill="#888" /><circle cx="26" cy="18" r="1.300" fill="#888" />
        </svg>
      </div>
    </>
  );
}

export default function App() {
  const dates: [string, number][] = [["2020/12/01", 118], ["2021/01/04", 463], ["2021/02/01", 763], ["2021/03/01", 988], ["2021/04/01", 1333], ["2021/04/23", 1558]];
  const volLine = volTop.map((_, i) => {
    if (volLineEnd[i] !== undefined) return volLineEnd[i];
    const near = volTop.slice(Math.max(i - 1, 0), i + 2);
    const avg = near.reduce((a, b) => a + (823 - b), 0) / near.length;
    return 823 - Math.max(avg - 5, 1);
  });
  return (
    <div className="flex h-[1080px] w-[1913px] flex-col overflow-hidden bg-black font-['Liberation_Sans','Noto_Sans_CJK_SC',sans-serif]">
      {/* title bar */}
      <div className="flex h-[23px] shrink-0 items-center bg-[#b9d1ea] text-[12px] leading-none text-black">
        <svg width="15" height="21" viewBox="0 0 15 21" shapeRendering="crispEdges">
          <rect width="15" height="21" fill="#1c3f8c" /><rect y="8" width="7" height="13" fill="#b01c1c" />
          <rect x="7" y="8" width="8" height="13" fill="#000" /><path d="M2 11h2v6H2zM8 10h1v8H8zM11 12h2v5h-2z" fill="#fff" />
        </svg>
        <span className="ml-[2px]">赢顺云端交易</span>
        <span className="ml-[13px] font-['Liberation_Mono'] text-[11px] tracking-[-0.2px]">- Ver6.8.223</span>
        <span className="ml-[36px]">文华云节点-浙江电信</span>
        <span className="ml-[42px]">系统K线图</span>
        <div className="ml-auto flex items-center">
          <svg width="12" height="12" viewBox="0 0 12 12" stroke="#000"><path d="M1 6.5h10" /></svg>
          <svg className="ml-[26px]" width="12" height="12" viewBox="0 0 12 12" fill="none" stroke="#000"><path d="M1.500 3.500h7v7h-7zM3.500 3V1.500h7v7H9" /></svg>
          <svg className="mx-[12px] ml-[26px]" width="12" height="12" viewBox="0 0 12 12" stroke="#000"><path d="M1 1l10 10M11 1 1 11" /></svg>
        </div>
      </div>
      {/* toolbar */}
      <div className="flex h-[37px] shrink-0 items-center border-b-2 border-[#4d4d4d] bg-[#e6e6e6]">
        <div className="flex items-center pt-[1px]">
          {toolItems.map((item, i) => (
            <div key={i} className="flex h-[24px] w-[30px] items-center justify-center">{item}</div>
          ))}
        </div>
        <div className="ml-auto mr-[18px] flex items-center text-[12px] leading-none text-[#1a1a1a]">
          <div className="relative mr-[22px]">
            发现
            <span className="absolute left-[25px] top-[-7px] flex h-[9px] w-[22px] items-center justify-center bg-[#ff4040] text-[8px] font-bold leading-none text-white">NEW</span>
          </div>
          {menus.map(([m, gap]) => (
            <span key={m} className={gap}>{m}</span>
          ))}
        </div>
      </div>
      {/* work area */}
      <div className="flex h-[931px] shrink-0">
        <LeftRail />
        <div className="flex w-[1643px] shrink-0 flex-col">
          <div className="flex h-[19px] items-center border-b border-[#c81414] pl-[6px] text-[12px] leading-none text-[#d8d8d8]">
            <svg width="16" height="8" viewBox="0 0 16 8" fill="none" stroke="#b0b0b0"><path d="M6 .5H.5v6H6M10 .5h5.500v6H10M4 3.500h8" /></svg>
            <span className="ml-[5px]">北汽蓝谷</span>
            <span className="ml-[1px] font-['Liberation_Mono'] text-[11px] tracking-[-0.6px]">(SHSE 600733)</span>
            <span className="ml-[10px]">日线</span>
            <span className="ml-[2px]"><Chevron color="#d8d8d8" /></span>
          </div>
          <KChart />
          <Pane
            top={474}
            height={146}
            ticks={[["1.00", 493.5], ["0.50", 554.5], ["0.00", 616.5]]}
            legend={
              <>
                <span className="text-[#e8e800]">威廉指标</span>
                <span className="ml-[2px]"><Chevron /></span>
                <span className="ml-[5px] text-[#dfe8f0]">XG 0.00</span>
                <span className="ml-[5px] text-[#e8e800]">XC 0.00</span>
              </>
            }
          >
            <Grid ys={[493, 554, 616]} />
            <polyline points={`${barX(0)},493 ${barX(1)},616 ${barX(6)},616 ${barX(7)},493 ${barX(8)},616 ${barX(98)},616 ${barX(99)},493 ${barX(100)},616`} fill="none" stroke="#f0f0f0" strokeWidth="0.9" />
            <line x1={barX(0)} x2={barX(101)} y1="616" y2="616" stroke="#e8e800" />
            <Marker y={620} />
          </Pane>
          <Pane
            top={620}
            height={107}
            ticks={[["0.00", 639.5], ["-50.00", 681.5]]}
            legend={
              <>
                <span className="text-[#e8e800]">WR(14)</span>
                <span className="ml-[2px]"><Chevron /></span>
                <span className="ml-[7px] text-[#dfe8f0]">WR -27.25</span>
              </>
            }
          >
            <Grid ys={[639, 681]} />
            <Line ys={wr} color="#f0f0f0" />
            <Marker y={727} />
          </Pane>
          <Pane
            top={727}
            height={96}
            ticks={[["500万", 743.5], ["250万", 783.5]]}
            legend={
              <>
                <span className="text-[#e8e800]">CJL</span>
                <span className="ml-[1px]"><Chevron /></span>
                <span className="ml-[5px] text-[12.3px] text-[#dfe8f0]">2988884.75(53:47)</span>
                <span className="ml-[8px] text-[12.3px] text-[#dfe8f0]">OPID 4324475392.00</span>
              </>
            }
          >
            <Grid ys={[743, 783]} />
            {volTop.map((top, i) =>
              candles[i][0] === "c" ? (
                <rect key={i} x={barX(i) - 6} y={top} width="13" height={823 - top} fill={DOWN} />
              ) : (
                <rect key={i} x={barX(i) - 6} y={top} width="12" height={823 - top} fill="#000" stroke={UP} />
              ),
            )}
            <Line ys={volLine} color="#f0f0f0" />
          </Pane>
          <Pane
            top={823}
            height={148}
            ticks={[["1.50", 844.5], ["1.00", 876.5], ["0.50", 908.5], ["0.00", 940.5]]}
            legend={
              <>
                <span className="text-[#e8e800]">MACD(12,26,9)</span>
                <span className="ml-[2px]"><Chevron /></span>
                <span className="ml-[5px] text-[#dfe8f0]">DIFF 1.54</span>
                <span className="ml-[5px] text-[#e8e800]">DEA 1.04</span>
                <span className="ml-[10px] text-[#dfe8f0]">1.00</span>
              </>
            }
          >
            <Grid ys={[844, 876, 908, 940]} />
            {macdBar.map((y, i) => (
              <line key={i} x1={barX(i)} x2={barX(i)} y1={y} y2="940" stroke={y < 940 ? UP : DOWN} />
            ))}
            <Line ys={dea} color={YELLOW} />
            <Line ys={diff} color="#f0f0f0" />
            <Marker y={971} />
          </Pane>
          <div className="relative flex-1 border-t border-[#c81414]">
            {dates.map(([d, x]) => (
              <span key={d} className="absolute top-[3px] text-[12px] leading-none text-[#7c7c7c]" style={{ left: x - 24 }}>
                {d}
              </span>
            ))}
          </div>
        </div>
        <ChipPanel />
        <div className="w-[4px] shrink-0 bg-[#4d4d4d]" />
      </div>
      {/* board tabs */}
      <div className="flex h-[26px] shrink-0 items-end border-b-2 border-[#f0f0f0] bg-[#4d4d4d] text-[12px] leading-none">
        <span className="ml-[23px] flex h-[22px] w-[60px] items-center justify-center bg-[#e6e6e6] text-[#111]">我的板块</span>
        <span className="ml-[6px] flex h-[22px] items-center text-[#d0d0d0]">沪深股市</span>
        <span className="ml-[6px] mb-[3px] h-[16px] w-px bg-[#808080]" />
        <span className="ml-[6px] mb-[4px] text-[16px] leading-none text-[#d0d0d0]">+</span>
        <span className="mb-[4px] ml-auto mr-[13px] flex items-center text-[13px] leading-none text-[#ff6a1a]">
          <svg className="mr-[5px]" width="20" height="15" viewBox="0 0 20 15" fill="none" stroke="#ff6a1a" strokeWidth="2">
            <path d="M3 12V8a7 7 0 0 1 14 0v4" /><rect x="1" y="9" width="3" height="5" fill="#ff6a1a" /><rect x="16" y="9" width="3" height="5" fill="#ff6a1a" />
          </svg>
          论坛提问
        </span>
      </div>
      {/* ticker */}
      <div className="flex h-[23px] shrink-0 items-center border-b border-[#555] bg-[#e6e6e6] text-[12px] font-bold leading-none text-[#ff0000]">
        <span className="w-[101px] text-[15px] font-bold leading-none tracking-[-0.6px] text-[#1f6fb8]">webStock</span>
        <span className="font-normal">上证指数</span>
        <span className="ml-[6px] w-[91px] whitespace-nowrap font-['Liberation_Mono'] text-[11.5px]">3474.17 +9.05</span>
        <span className="ml-[25px] font-normal">文华商品</span>
        <span className="ml-[6px] w-[83px] whitespace-nowrap font-['Liberation_Mono'] text-[11.5px]">184.35 +1.33</span>
        <span className="ml-[29px] w-[42px] whitespace-nowrap font-normal tracking-[-0.8px]">CRB指数</span>
        <span className="ml-[12px] w-[83px] whitespace-nowrap font-['Liberation_Mono'] text-[11.5px]">195.31 +0.63</span>
        <span className="ml-[728px] whitespace-nowrap text-[12.4px] font-normal text-[#2767a8]">[提醒]有不法网站/直播间假冒文华进行诈骗</span>
        <div className="ml-auto mr-[11px] flex items-center">
          <span className="flex h-[18px] w-[51px] items-center justify-center border border-[#777] bg-[#6e6e6e] text-[12px] font-normal text-white">期货户</span>
          <span className="ml-[3px] flex h-[18px] w-[51px] items-center justify-center border border-[#777] bg-[#6e6e6e] text-[12px] font-normal text-white">外盘户</span>
          <svg className="ml-[8px]" width="8" height="12" viewBox="0 0 8 12" stroke="#ff2020"><path d="M1 1l5 10" /></svg>
          <span className="ml-[6px] h-[14px] w-[15px] border-b-[3px] border-[#00e000] bg-[#0a6a0a]" />
          <svg className="ml-[8px]" width="15" height="15" viewBox="0 0 15 15" fill="#1ea51e" shapeRendering="crispEdges"><rect y="11" width="3" height="4" /><rect x="4" y="8" width="3" height="7" /><rect x="8" y="4" width="3" height="11" /><rect x="12" y="0" width="3" height="15" /></svg>
          <span className="ml-[9px] text-[12px] font-normal text-[#111]">19:31:55-Local</span>
        </div>
      </div>
      {/* windows taskbar */}
      <div className="flex min-h-0 flex-1 bg-[linear-gradient(90deg,#a6bedc_1640px,#7d95b4_1700px,#7d95b4)]">
        <TaskbarIcons />
        <div className="ml-auto flex items-center text-[#26384f]">
          <svg width="16" height="12" viewBox="0 0 16 12" fill="#cfd6de" stroke="#78838f"><rect x=".5" y="3.500" width="15" height="8" rx="1" /><path d="M7 3V1h7" fill="none" /></svg>
          <span className="ml-[6px] flex h-[16px] w-[16px] items-center justify-center rounded-full border border-[#123a8a] bg-[#1e4fc0] text-[11px] font-bold leading-none text-white">?</span>
          <svg className="ml-[9px]" width="10" height="16" viewBox="0 0 10 16" fill="none" stroke="#fff"><rect x="1" y="1" width="7" height="5" /><path d="M2 11h6l-3 3z" fill="#fff" stroke="none" /></svg>
          <svg className="ml-[11px]" width="9" height="6" viewBox="0 0 9 6"><path d="M0 6l4.500-5L9 6z" fill="#f2f6fa" /></svg>
          <svg className="ml-[12px]" width="16" height="16" viewBox="0 0 16 16" fill="#e8edf2" stroke="#26384f"><rect x="5" y="3" width="10" height="9" /><rect x="1" y="1" width="4" height="10" /><path d="M8 14h5" /></svg>
          <svg className="ml-[12px]" width="13" height="14" viewBox="0 0 13 14" fill="#e8edf2" stroke="#5a6b80"><path d="M1 5h3l4-4v12L4 9H1z" /><path d="M10 4q2 3 0 6" fill="none" /></svg>
          <div className="ml-[4px] flex w-[75px] flex-col items-center text-[12px] leading-[19px] text-[#f4f6f8]">
            <span>19:31</span>
            <span>2021/4/23</span>
          </div>
          <div className="ml-[2px] h-full w-[14px] border-l border-[#55697f] bg-[linear-gradient(180deg,#9fb2c8,#6e849e)]" />
        </div>
      </div>
    </div>
  );
}
